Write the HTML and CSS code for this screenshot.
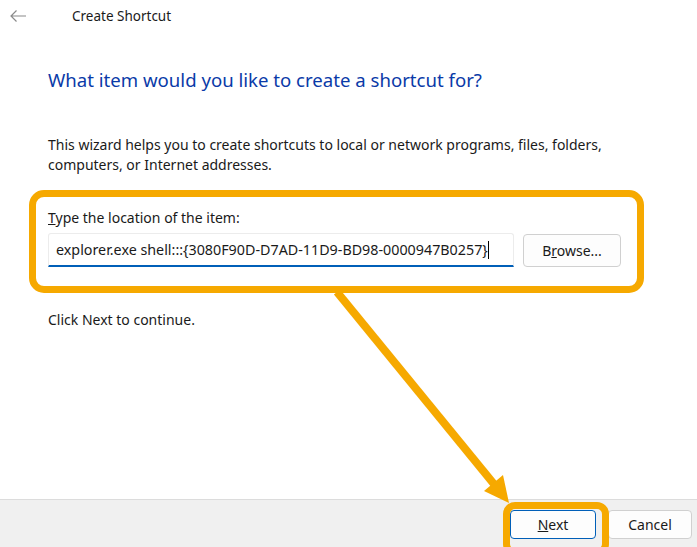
FILE: index.html
```html
<!DOCTYPE html>
<html lang="en">

<head>
  <meta charset="UTF-8" />
  <title>Create Shortcut</title>
  <link rel="stylesheet" href="styles.css">
</head>

<body>
  <div class="wizard">
    <div class="titlebar">
      <svg class="back" width="18" height="14" viewBox="0 0 18 14">
        <path d="M17 7H2M7.5 1.5L2 7l5.5 5.5" fill="none" stroke="#8a8a8a" stroke-width="1.2" />
      </svg>
      <span class="title">Create Shortcut</span>
    </div>

    <div class="content">
      <h1 class="heading">What item would you like to create a shortcut for?</h1>
      <p class="intro">This wizard helps you to create shortcuts to local or network programs, files, folders,
        computers, or Internet addresses.</p>

      <label class="field-label" for="location"><u>T</u>ype the location of the item:</label>
      <div class="field-row">
        <div class="textbox" id="location">explorer.exe shell:::{3080F90D-D7AD-11D9-BD98-0000947B0257}<span class="caret"></span></div>
        <button class="btn browse">B<u>r</u>owse...</button>
      </div>

      <p class="hint">Click Next to continue.</p>
    </div>

    <div class="footer">
      <button class="btn next"><u>N</u>ext</button>
      <button class="btn cancel">Cancel</button>
    </div>

    <!-- annotations drawn over the dialog -->
    <div class="mark mark-field"></div>
    <div class="mark mark-next"></div>
    <svg class="pointer" width="697" height="547" viewBox="0 0 697 547">
      <line x1="337" y1="292" x2="498" y2="489" stroke="#f6a900" stroke-width="8" />
      <path d="M509 503L484 491L503 475Z" fill="#f6a900" />
    </svg>
  </div>
</body>

</html>
```

FILE: styles.css
```css
body {
  margin: 0;
  font-family: 'Noto Sans', 'Segoe UI', sans-serif;
  color: #1a1a1a;
  background: #ffffff;
}

.wizard {
  position: relative;
  width: 697px;
  height: 547px;
  display: flex;
  flex-direction: column;
  overflow: hidden;
}

.titlebar {
  display: flex;
  align-items: center;
  height: 32px;
  padding-left: 9px;
}

.back {
  margin-right: 45px;
}

.title {
  font-size: 13.5px;
  color: #1a1a1a;
}

.content {
  flex: 1;
  padding-left: 48px;
  padding-right: 40px;
}

.heading {
  margin: 35px 0 0 0;
  font-size: 18.6px;
  font-weight: 400;
  color: #0a3aa8;
  line-height: 26px;
}

.intro {
  max-width: 575px;
  margin: 42px 0 0 0;
  font-size: 14px;
  line-height: 19.5px;
}

.field-label {
  display: block;
  margin-top: 35px;
  font-size: 14px;
  line-height: 18px;
}

.field-row {
  display: flex;
  align-items: flex-start;
  gap: 9px;
  margin-top: 6px;
}

.textbox {
  box-sizing: border-box;
  width: 466px;
  height: 34px;
  padding: 6px 7px 0 7px;
  border: 1px solid #ececec;
  border-bottom: 2px solid #005fb8;
  border-radius: 3px 3px 0 0;
  font-size: 14.3px;
  line-height: 20px;
  white-space: nowrap;
  overflow: hidden;
}

.caret {
  display: inline-block;
  width: 1px;
  height: 18px;
  background: #000;
  vertical-align: -4px;
}

.btn {
  box-sizing: border-box;
  font-family: inherit;
  font-size: 14px;
  color: #1a1a1a;
  background: #fdfdfd;
  border: 1px solid #d0d0d0;
  border-radius: 4px;
  padding: 0;
}

.browse {
  width: 98px;
  height: 33px;
  margin-top: 1px;
}

.hint {
  margin: 43px 0 0 0;
  font-size: 14px;
}

.footer {
  height: 48px;
  box-sizing: border-box;
  background: #f0f0f0;
  border-top: 1px solid #dcdcdc;
  display: flex;
  justify-content: flex-end;
  align-items: flex-start;
  gap: 12px;
  padding: 10px 5px 0 0;
}

.next {
  width: 86px;
  height: 29px;
  border-color: #005fb8;
}

.cancel {
  width: 84px;
  height: 29px;
}

.mark {
  position: absolute;
  border: 7px solid #f6a900;
  border-radius: 15px;
}

.mark-field {
  left: 29px;
  top: 190px;
  width: 601px;
  height: 89px;
}

.mark-next {
  left: 503px;
  top: 502px;
  width: 92px;
  height: 40px;
  border-radius: 12px;
}

.pointer {
  position: absolute;
  left: 0;
  top: 0;
  pointer-events: none;
}
```
